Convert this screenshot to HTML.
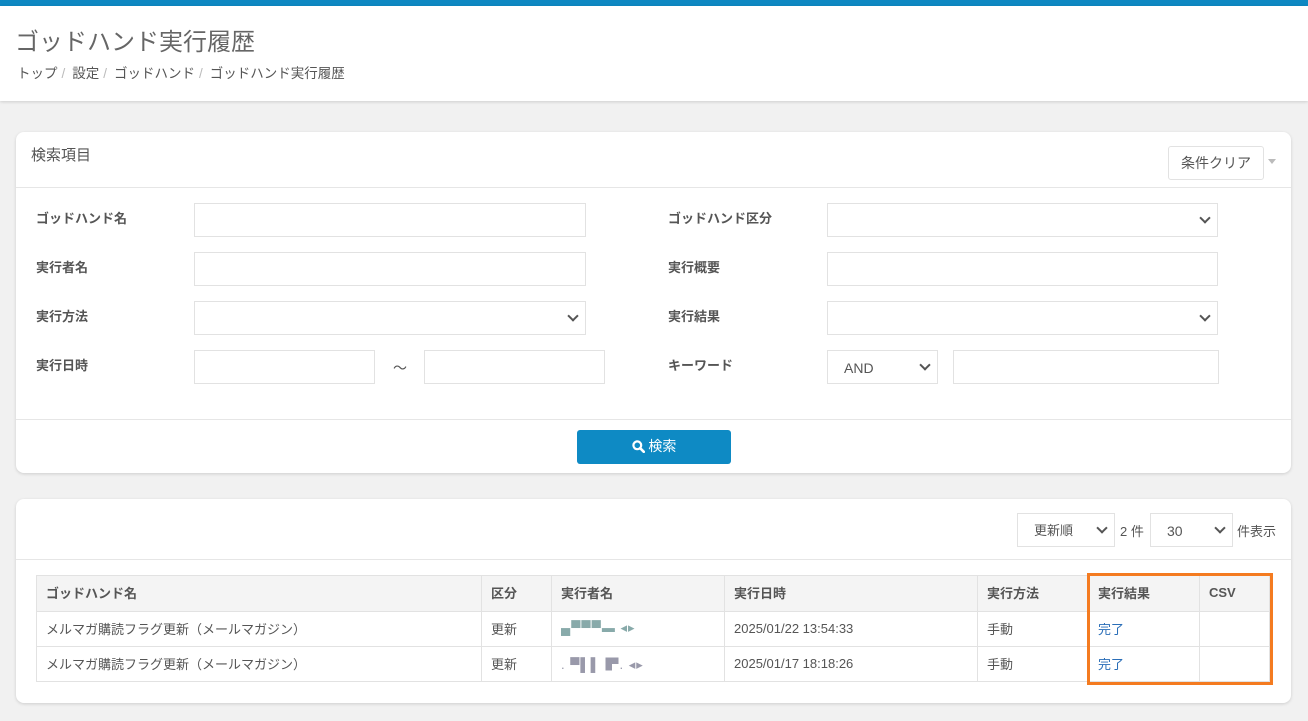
<!DOCTYPE html><html><head><meta charset="utf-8"><style>
*{box-sizing:border-box;margin:0;padding:0}
body{width:1308px;height:721px;background:#f1f1f1;font-family:"Liberation Sans","Noto Sans CJK JP",sans-serif;color:#555;position:relative;overflow:hidden;font-size:13px}
.a{position:absolute}
.bar{left:0;top:0;width:1308px;height:6px;background:#0e88c2}
.hdr{left:0;top:6px;width:1308px;height:95px;background:#fff;box-shadow:0 1px 3px rgba(0,0,0,.15)}
.card{background:#fff;border-radius:8px;box-shadow:0 1px 3px rgba(0,0,0,.15)}
.in{background:#fff;border:1px solid #e2e2e2;height:34px}
.lb{font-weight:bold;color:#555;font-size:13px}
.chev{position:absolute;right:8px;top:10px;width:8px;height:8px;border-right:2px solid #555;border-bottom:2px solid #555;transform:rotate(45deg)}
.hl{height:1px;background:#e6e6e6}
table{border-collapse:collapse;position:absolute;left:36px;top:575px;width:1234px}
td,th{border:1px solid #e2e2e2;height:35px;text-align:left;padding:0 9px 2px;font-size:13px;color:#555}
th{background:#f4f4f4;height:36px}
.bc{color:#bbb;margin:0 7px 0 4px}
</style></head><body>
<div class="a bar"></div>
<div class="a hdr"></div>
<div class="a" style="left:15px;top:22px;font-size:24px;color:#666">ゴッドハンド実行履歴</div>
<div class="a" style="left:17px;top:62px;font-size:13.5px;color:#555">トップ<span class="bc">/</span>設定<span class="bc">/</span>ゴッドハンド<span class="bc">/</span>ゴッドハンド実行履歴</div>

<div class="a card" style="left:16px;top:132px;width:1275px;height:341px"></div>
<div class="a" style="left:31px;top:144px;font-size:15px;color:#555">検索項目</div>
<div class="a in" style="left:1168px;top:146px;width:96px;height:34px;border-radius:3px;text-align:center;line-height:32px;font-size:14px">条件クリア</div>
<div class="a" style="left:1268px;top:159px;border-left:4px solid transparent;border-right:4px solid transparent;border-top:5px solid #bbb"></div>
<div class="a hl" style="left:16px;top:187px;width:1275px"></div>

<div class="a lb" style="left:36px;top:208px">ゴッドハンド名</div>
<div class="a lb" style="left:36px;top:257px">実行者名</div>
<div class="a lb" style="left:36px;top:306px">実行方法</div>
<div class="a lb" style="left:36px;top:355px">実行日時</div>
<div class="a in" style="left:194px;top:203px;width:392px"></div>
<div class="a in" style="left:194px;top:252px;width:392px"></div>
<div class="a in" style="left:194px;top:301px;width:392px"><div class="chev"></div></div>
<div class="a in" style="left:194px;top:350px;width:181px"></div>
<div class="a" style="left:393px;top:358px;font-size:14px">～</div>
<div class="a in" style="left:424px;top:350px;width:181px"></div>

<div class="a lb" style="left:668px;top:208px">ゴッドハンド区分</div>
<div class="a lb" style="left:668px;top:257px">実行概要</div>
<div class="a lb" style="left:668px;top:306px">実行結果</div>
<div class="a lb" style="left:668px;top:355px">キーワード</div>
<div class="a in" style="left:827px;top:203px;width:391px"><div class="chev"></div></div>
<div class="a in" style="left:827px;top:252px;width:391px"></div>
<div class="a in" style="left:827px;top:301px;width:391px"><div class="chev"></div></div>
<div class="a in" style="left:827px;top:350px;width:111px;padding-left:16px;line-height:34px;font-size:14px">AND<div class="chev"></div></div>
<div class="a in" style="left:953px;top:350px;width:266px"></div>

<div class="a hl" style="left:16px;top:419px;width:1275px"></div>
<div class="a" style="left:577px;top:430px;width:154px;height:34px;background:#0e8ac4;border-radius:3px;color:#fff;font-size:14px;text-align:center;line-height:32px">
<svg width="13" height="13" viewBox="0 0 13 13" style="vertical-align:-2px"><circle cx="5.3" cy="5.3" r="3.9" fill="none" stroke="#fff" stroke-width="2.2"/><path d="M8.2 8.2L11.8 11.8" stroke="#fff" stroke-width="2.6" stroke-linecap="round"/></svg> 検索</div>

<div class="a card" style="left:16px;top:499px;width:1275px;height:204px"></div>
<div class="a in" style="left:1017px;top:513px;width:98px;padding-left:16px;line-height:34px">更新順<div class="chev"></div></div>
<div class="a" style="left:1120px;top:521px">2 件</div>
<div class="a in" style="left:1150px;top:513px;width:83px;padding-left:16px;line-height:34px;font-size:14px">30<div class="chev"></div></div>
<div class="a" style="left:1237px;top:521px">件表示</div>
<div class="a hl" style="left:16px;top:559px;width:1275px"></div>

<table>
<tr><th style="width:445px">ゴッドハンド名</th><th style="width:70px">区分</th><th style="width:173px">実行者名</th><th style="width:253px">実行日時</th><th style="width:111px">実行方法</th><th style="width:111px">実行結果</th><th>CSV</th></tr>
<tr><td>メルマガ購読フラグ更新（メールマガジン）</td><td>更新</td><td><span style="color:#8aa;letter-spacing:1px">▄▀▀▀▬ ◂▸</span></td><td>2025/01/22 13:54:33</td><td>手動</td><td style="color:#2a6eb8">完了</td><td></td></tr>
<tr><td>メルマガ購読フラグ更新（メールマガジン）</td><td>更新</td><td><span style="color:#99a;letter-spacing:1px">. ▀▌▌ ▛. ◂▸</span></td><td>2025/01/17 18:18:26</td><td>手動</td><td style="color:#2a6eb8">完了</td><td></td></tr>
</table>
<div class="a" style="left:1087px;top:573px;width:186px;height:112px;border:3px solid #f47b20"></div>
</body></html>
